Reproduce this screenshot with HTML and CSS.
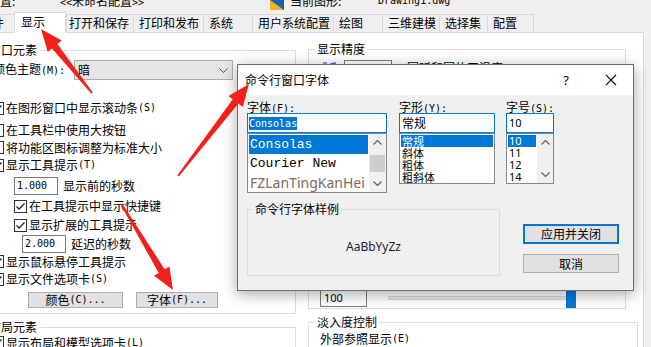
FILE: index.html
```html
<!DOCTYPE html>
<html>
<head>
<meta charset="utf-8">
<link rel="stylesheet" href="styles.css">
</head>
<body>
<div class="topbar">
  <span class="tb-lbl1">当前配置:</span>
  <span class="tb-val1"><span class="m">&lt;&lt;</span>未命名配置<span class="m">&gt;&gt;</span></span>
  <span class="tb-icon"><svg width="14" height="10" viewBox="0 0 14 10"><rect width="14" height="10" fill="#1f5fae"/><polygon points="0,0 0,10 14,10" fill="#f6b21b"/></svg></span>
  <span class="tb-lbl2">当前图形:</span>
  <span class="tb-val2 m">Drawing1.dwg</span>
</div>

<div class="tabs">
  <div class="tab t0">文件</div>
  <div class="tab t1 active">显示</div>
  <div class="tab t2">打开和保存</div>
  <div class="tab t3">打印和发布</div>
  <div class="tab t4">系统</div>
  <div class="tab t5">用户系统配置</div>
  <div class="tab t6">绘图</div>
  <div class="tab t7">三维建模</div>
  <div class="tab t8">选择集</div>
  <div class="tab t9 last">配置</div>
</div>

<div class="panel">
  <div class="col-left">
    <div class="grp g-win">
      <span class="grp-title">窗口元素</span>
      <div class="row h20 mt3"><span class="combo-lbl">颜色主题<span class="m">(M):</span></span><div class="combo"><span>暗</span><svg width="9" height="5" viewBox="0 0 9 5"><polyline points="0.5,0.5 4.5,4.5 8.5,0.5" fill="none" stroke="#555" stroke-width="1"/></svg></div></div>
      <div class="row mt19"><span class="cb"><svg width="11" height="11" viewBox="0 0 11 11"><polyline points="1.5,5.5 4,8 9.5,2.5" fill="none" stroke="#222" stroke-width="1.3"/></svg></span>在图形窗口中显示滚动条<span class="m">(S)</span></div>
      <div class="row mt4"><span class="cb"></span>在工具栏中使用大按钮</div>
      <div class="row h17"><span class="cb"></span>将功能区图标调整为标准大小</div>
      <div class="row"><span class="cb"><svg width="11" height="11" viewBox="0 0 11 11"><polyline points="1.5,5.5 4,8 9.5,2.5" fill="none" stroke="#222" stroke-width="1.3"/></svg></span>显示工具提示<span class="m">(T)</span></div>
      <div class="row mt3 sub1"><span class="inp w44 m">1.000</span><span class="inp-lbl">显示前的秒数</span></div>
      <div class="row mt2 sub1"><span class="cb"><svg width="11" height="11" viewBox="0 0 11 11"><polyline points="1.5,5.5 4,8 9.5,2.5" fill="none" stroke="#222" stroke-width="1.3"/></svg></span>在工具提示中显示快捷键</div>
      <div class="row mt1 sub1"><span class="cb"><svg width="11" height="11" viewBox="0 0 11 11"><polyline points="1.5,5.5 4,8 9.5,2.5" fill="none" stroke="#222" stroke-width="1.3"/></svg></span>显示扩展的工具提示</div>
      <div class="row mt1 sub2"><span class="inp w44 m">2.000</span><span class="inp-lbl">延迟的秒数</span></div>
      <div class="row h17"><span class="cb"><svg width="11" height="11" viewBox="0 0 11 11"><polyline points="1.5,5.5 4,8 9.5,2.5" fill="none" stroke="#222" stroke-width="1.3"/></svg></span>显示鼠标悬停工具提示</div>
      <div class="row"><span class="cb"><svg width="11" height="11" viewBox="0 0 11 11"><polyline points="1.5,5.5 4,8 9.5,2.5" fill="none" stroke="#222" stroke-width="1.3"/></svg></span>显示文件选项卡<span class="m">(S)</span></div>
      <div class="row h16 mt4"><span class="btn btn-color">颜色<span class="m">(C)...</span></span><span class="btn btn-font">字体<span class="m">(F)...</span></span></div>
    </div>
    <div class="grp g-layout">
      <span class="grp-title">布局元素</span>
      <div class="row mt2"><span class="cb"><svg width="11" height="11" viewBox="0 0 11 11"><polyline points="1.5,5.5 4,8 9.5,2.5" fill="none" stroke="#222" stroke-width="1.3"/></svg></span>显示布局和模型选项卡<span class="m">(L)</span></div>
    </div>
  </div>

  <div class="col-right">
    <div class="grp g-prec">
      <span class="grp-title">显示精度</span>
      <div class="row mt4 prec-row"><span class="prec-icon"><svg width="16" height="16" viewBox="0 0 16 16"><path d="M2 14 A12 12 0 0 1 14 2" fill="none" stroke="#3d6fb6" stroke-width="1.5"/><rect x="1" y="1" width="4" height="4" fill="#8aa6c8"/></svg></span><span class="inp w48 m">1000</span><span class="prec-lbl">圆弧和圆的平滑度<span class="m">(A)</span></span></div>
      <div class="row cross-row"><span class="inp inp100">100</span><div class="slider"><div class="track"></div><div class="thumb"></div></div></div>
    </div>
    <div class="grp g-fade">
      <span class="grp-title">淡入度控制</span>
      <div class="row mt1 fade-row">外部参照显示<span class="m">(E)</span></div>
    </div>
  </div>
</div>

<div class="dlg">
  <div class="dlg-title">
    <span class="dlg-caption">命令行窗口字体</span>
    <span class="dlg-help">?</span>
    <span class="dlg-close"><svg width="12" height="12" viewBox="0 0 12 12"><path d="M1 1L11 11M11 1L1 11" stroke="#111" stroke-width="1.1"/></svg></span>
  </div>
  <div class="dlg-body">
    <div class="pick">
      <div class="pcol c1">
        <span class="plbl">字体<span class="m">(<u>F</u>):</span></span>
        <div class="finp"><span class="sel m">Consolas</span></div>
        <div class="list l1">
          <div class="items">
            <div class="it mono hl">Consolas</div>
            <div class="it mono">Courier New</div>
            <div class="it fz">FZLanTingKanHei</div>
          </div>
          <div class="sb">
            <div class="sb-btn"><svg width="9" height="5" viewBox="0 0 9 5"><polyline points="0.5,4.5 4.5,0.5 8.5,4.5" fill="none" stroke="#606060" stroke-width="1.2"/></svg></div>
            <div class="sb-track"><div class="sb-thumb"></div></div>
            <div class="sb-btn"><svg width="9" height="5" viewBox="0 0 9 5"><polyline points="0.5,0.5 4.5,4.5 8.5,0.5" fill="none" stroke="#606060" stroke-width="1.2"/></svg></div>
          </div>
        </div>
      </div>
      <div class="pcol c2">
        <span class="plbl">字形<span class="m">(<u>Y</u>):</span></span>
        <div class="finp pad2">常规</div>
        <div class="list l2">
          <div class="items">
            <div class="it sm hl">常规</div>
            <div class="it sm">斜体</div>
            <div class="it sm">粗体</div>
            <div class="it sm">粗斜体</div>
          </div>
        </div>
      </div>
      <div class="pcol c3">
        <span class="plbl">字号<span class="m">(<u>S</u>):</span></span>
        <div class="finp pad2 num">10</div>
        <div class="list l3">
          <div class="items">
            <div class="it sm num hl">10</div>
            <div class="it sm num">11</div>
            <div class="it sm num">12</div>
            <div class="it sm num">14</div>
          </div>
          <div class="sb sb-small">
            <div class="sb-btn"><svg width="9" height="5" viewBox="0 0 9 5"><polyline points="0.5,4.5 4.5,0.5 8.5,4.5" fill="none" stroke="#606060" stroke-width="1.2"/></svg></div>
            <div class="sb-track"></div>
            <div class="sb-btn"><svg width="9" height="5" viewBox="0 0 9 5"><polyline points="0.5,0.5 4.5,4.5 8.5,0.5" fill="none" stroke="#606060" stroke-width="1.2"/></svg></div>
          </div>
        </div>
      </div>
    </div>
    <div class="dlg-bottom">
      <div class="sample">
        <span class="grp-title">命令行字体样例</span>
        <span class="sample-text">AaBbYyZz</span>
      </div>
      <div class="dlg-btns">
        <span class="dbtn primary">应用并关闭</span>
        <span class="dbtn cancel">取消</span>
      </div>
    </div>
  </div>
</div>

<svg class="arrows" width="651" height="347" viewBox="0 0 651 347">
  <polygon points="92.8,92.4 57.4,44.0 61.7,40.6 41,29 47.7,51.8 52.0,48.4 91.2,93.6" fill="#f0201c"/>
  <polygon points="178.8,176.6 238.4,103.5 242.7,106.9 249,84 228.5,95.9 232.8,99.3 177.2,175.4" fill="#f0201c"/>
  <polygon points="121.1,205.5 158.7,272.9 154.0,275.7 173,290 169.4,266.5 164.7,269.3 122.9,204.5" fill="#f0201c"/>
</svg>
</body>
</html>
```
FILE: styles.css
```css
* { box-sizing: border-box; }
html, body { margin: 0; padding: 0; }
body {
  width: 651px; height: 347px; overflow: hidden; position: relative;
  background: #f0f0f0; color: #000;
  font-family: "Noto Sans CJK SC", "Noto Sans", sans-serif;
  font-size: 12px; line-height: 14px;
}
.m { font-family: "DejaVu Sans Mono", "Liberation Mono", monospace; font-size: 10px; }

/* top info strip */
.topbar { display: flex; height: 12px; overflow: hidden; margin-left: -36px; }
.topbar > span { display: block; flex: none; margin-top: -6px; line-height: 14px; white-space: nowrap; }
.topbar > .tb-icon { margin-top: 0; }
.tb-icon svg { display: block; }
.tb-lbl1 { width: 96px; }
.tb-val1 { width: 210px; }
.tb-icon { width: 20px; }
.tb-lbl2 { width: 88px; }

/* tabs */
.tabs { display: flex; align-items: flex-end; height: 20px; margin-left: -26px; position: relative; z-index: 2; }
.tab {
  flex: none; height: 18px; background: #f0f0f0;
  border: 1px solid #d9d9d9; border-right: none; border-bottom: none;
  padding-left: 5px; line-height: 16px; white-space: nowrap;
}
.tab.last { border-right: 1px solid #d9d9d9; }
.tab.active { height: 21px; margin-bottom: -1px; background: #fff; border-right: 1px solid #d9d9d9; padding-left: 6px; line-height: 18px; }
.t0 { width: 40px; }
.t1 { width: 52px; }
.t2 { width: 67px; padding-left: 2px; }
.t3 { width: 70px; }
.t4 { width: 49px; }
.t5 { width: 81px; }
.t6 { width: 49px; }
.t7 { width: 57px; }
.t8 { width: 48px; }
.t9 { width: 47px; }

/* main panel */
.panel {
  display: flex; align-items: flex-start; overflow: hidden;
  width: 644px; height: 315px; background: #fff;
  border-top: 1px solid #d9d9d9; border-right: 1px solid #d9d9d9;
}
.col-left { flex: none; width: 316px; margin-left: -20px; }
.col-right { flex: none; width: 330px; margin-left: 12px; }

.grp { border: 1px solid #dcdcdc; display: flex; flex-direction: column; align-items: flex-start; }
.grp-title { margin-top: -8px; margin-left: 6px; padding: 0 2px; background: #fff; line-height: 14px; white-space: nowrap; }
.g-win { margin-top: 17px; height: 264px; }
.g-layout { margin-top: 13px; height: 20px; border-bottom: none; }
.g-win > .row, .g-layout > .row { margin-left: 10px; }

.row { display: flex; align-items: center; height: 18px; flex: none; white-space: nowrap; }
.h20 { height: 20px; }
.h17 { height: 17px; }
.h16 { height: 16px; }
.mt1 { margin-top: 1px; }
.mt2 { margin-top: 2px; }
.mt3 { margin-top: 3px; }
.mt4 { margin-top: 4px; }
.mt19 { margin-top: 19px; }
.g-win > .sub1 { margin-left: 33px; }
.g-win > .sub2 { margin-left: 41px; }
.g-layout > .row { height: 12px; align-items: flex-start; overflow: hidden; }

.cb { flex: none; width: 13px; height: 13px; border: 1px solid #333; background: #fff; margin-right: 2px; display: flex; }
.cb svg { display: block; }

.combo-lbl { width: 81px; margin-left: 2px; }
.combo {
  width: 159px; height: 20px; background: #e5e5e5; border: 1px solid #adadad;
  display: flex; align-items: center; justify-content: space-between; padding: 0 4px 0 3px;
}

.inp { flex: none; height: 18px; border: 1px solid #7a7a7a; background: #fff; display: flex; align-items: center; padding-left: 2px; }
.w44 { width: 44px; }
.w48 { width: 48px; }
.inp-lbl { margin-left: 5px; }

.btn { flex: none; height: 16px; background: #e1e1e1; border: 1px solid #adadad; display: flex; align-items: center; justify-content: center; }
.btn-color { width: 95px; margin-left: 37px; }
.btn-font { width: 82px; margin-left: 13px; }

/* right column */
.g-prec { width: 318px; height: 260px; margin-top: 16px; }
.prec-row { margin-left: 13px; }
.prec-icon { flex: none; width: 16px; height: 16px; }
.prec-icon svg { display: block; }
.prec-row .inp { margin-left: 6px; }
.prec-lbl { margin-left: 15px; }
.cross-row { margin-top: auto; margin-bottom: 1px; margin-left: 11px; }
.inp100 { width: 47px; font-family: "Noto Sans", sans-serif; font-size: 11px; padding-left: 3px; }
.slider { position: relative; width: 188px; height: 19px; margin-left: 21px; display: flex; align-items: center; }
.track { width: 100%; height: 4px; background: #e7e7e7; border: 1px solid #d6d6d6; }
.thumb { position: absolute; right: 0; top: 0; width: 10px; height: 19px; background: #0078d7; }
.g-fade { width: 330px; height: 25px; margin-top: 13px; border-bottom: none; }
.fade-row { margin-left: 11px; height: 17px; }

/* dialog */
.dlg {
  position: absolute; left: 237px; top: 64px; z-index: 5;
  width: 397px; height: 227px;
  border: 1px solid #6e6e6e; background: #f0f0f0;
  box-shadow: 0 3px 14px rgba(0, 0, 0, 0.35);
  display: flex; flex-direction: column;
}
.dlg-title { flex: none; height: 30px; background: #fff; display: flex; align-items: center; }
.dlg-caption { flex: 1; padding-left: 7px; }
.dlg-help { width: 14px; margin-right: 31px; text-align: center; font-family: "Noto Sans", sans-serif; font-size: 13px; }
.dlg-close { width: 14px; height: 14px; margin-right: 15px; display: flex; align-items: center; justify-content: center; }
.dlg-close svg { display: block; }
.dlg-body { flex: 1; padding: 5px 0 0 9px; }
.pick { display: flex; align-items: flex-start; }
.pcol { flex: none; display: flex; flex-direction: column; }
.c1 { width: 140px; }
.c2 { width: 96px; margin-left: 12px; }
.c3 { width: 48px; margin-left: 11px; }
.plbl { height: 13px; line-height: 13px; white-space: nowrap; }
.finp { height: 20px; border: 1px solid #0078d7; background: #fff; display: flex; align-items: center; padding-left: 1px; }
.finp.pad2 { padding-left: 2px; }
.sel { background: #0078d7; color: #fff; line-height: 13px; }
.num { font-family: "Noto Sans", sans-serif; font-size: 11px; }

.list { border: 1px solid #828790; background: #fff; display: flex; }
.l1 { height: 60px; }
.l2, .l3 { height: 51px; }
.items { flex: 1; min-width: 0; display: flex; flex-direction: column; padding: 1px 1px 0 1px; overflow: hidden; }
.it { white-space: nowrap; padding-left: 1px; }
.it.mono { height: 19px; line-height: 19px; font-family: "Liberation Mono", monospace; font-size: 13px; }
.it.fz { height: 19px; line-height: 19px; font-family: "Noto Sans", sans-serif; font-size: 14px; color: #7d6b5f; }
.it.sm { height: 12px; line-height: 12px; font-size: 11px; }
.it.hl { background: #0078d7; color: #fff; }

.sb { flex: none; width: 17px; background: #f0f0f0; display: flex; flex-direction: column; }
.sb-small { width: 16px; }
.sb-btn { flex: none; height: 17px; display: flex; align-items: center; justify-content: center; }
.sb-btn svg { display: block; }
.sb-track { flex: 1; }
.sb-thumb { margin: 4px 1px 0; height: 17px; background: #cdcdcd; }

.dlg-bottom { display: flex; align-items: flex-start; margin-top: 16px; }
.sample { flex: none; width: 253px; height: 67px; border: 1px solid #dcdcdc; display: flex; flex-direction: column; align-items: flex-start; }
.sample .grp-title { background: #f0f0f0; margin-left: 5px; }
.sample-text { align-self: center; margin-top: 24px; font-family: "Noto Sans", sans-serif; font-size: 12px; line-height: 14px; color: #1b1b3a; }
.dlg-btns { flex: none; margin-left: 23px; display: flex; flex-direction: column; }
.dbtn { width: 96px; background: #e1e1e1; display: flex; align-items: center; justify-content: center; }
.dbtn.primary { height: 20px; margin-top: 15px; border: 2px solid #0078d7; }
.dbtn.cancel { height: 19px; margin-top: 10px; border: 1px solid #adadad; }

/* annotation arrows overlay */
.arrows { position: absolute; left: 0; top: 0; z-index: 10; pointer-events: none; }
```
